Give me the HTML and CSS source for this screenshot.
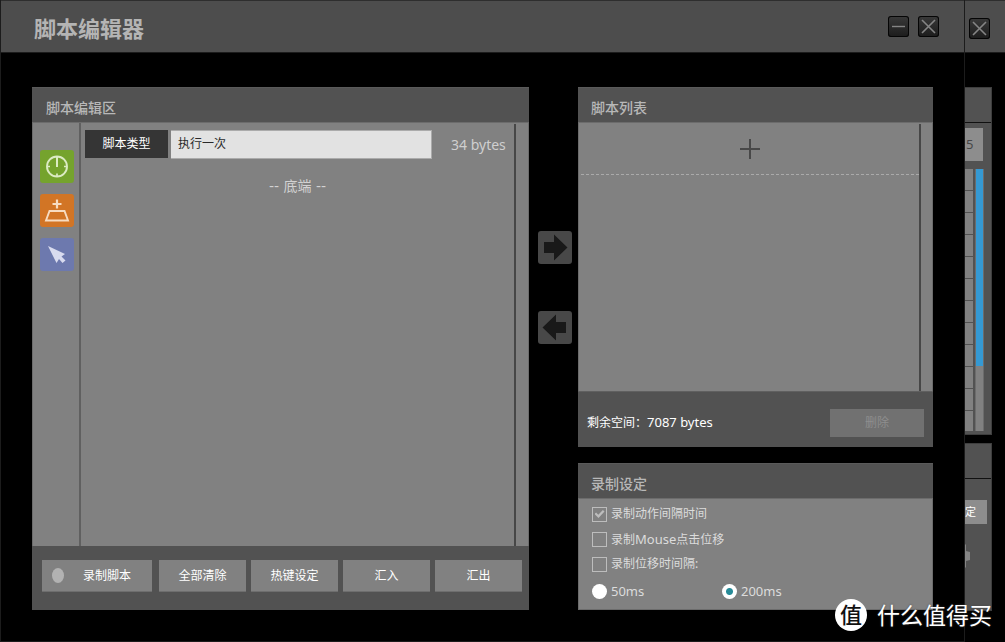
FILE: index.html
```html
<!DOCTYPE html>
<html lang="zh-CN">
<head>
<meta charset="utf-8">
<title>脚本编辑器</title>
<link rel="stylesheet" href="styles.css">
</head>
<body>
<div class="desktop">
  <main class="dialog">
    <header class="titlebar">
      <h1 class="title">脚本编辑器</h1>
      <div class="window-buttons">
        <button class="window-button" type="button" aria-label="最小化">
          <svg width="21" height="21" viewBox="0 0 21 21"><path d="M4 10.5h13" stroke="#858585" stroke-width="1.4"/></svg>
        </button>
        <button class="window-button" type="button" aria-label="关闭">
          <svg width="21" height="21" viewBox="0 0 21 21"><path d="M4 4l13 13M17 4L4 17" stroke="#858585" stroke-width="1.6"/></svg>
        </button>
      </div>
    </header>

    <div class="workspace">
      <section class="panel">
        <h2 class="panel-title">脚本编辑区</h2>
        <div class="panel-body">
          <div class="tools">
            <button class="tool tool-delay" type="button" aria-label="延迟">
              <svg width="34" height="33" viewBox="0 0 34 33" fill="none" stroke="#dcebc3"><circle cx="17" cy="16.500" r="10" stroke-width="1.9"/><path d="M17 7v10" stroke-width="2"/><path d="M17 23.500v3M7 16.500h3M24 16.500h3" stroke-width="1.7"/></svg>
            </button>
            <button class="tool tool-key" type="button" aria-label="按键">
              <svg width="34" height="33" viewBox="0 0 34 33" fill="none" stroke="#f7dcc0"><path d="M17 5.500v9M12.500 10h9" stroke-width="2.200"/><path d="M9.500 17h15l3.500 9.500H6z" stroke-width="1.9"/></svg>
            </button>
            <button class="tool tool-mouse" type="button" aria-label="鼠标">
              <svg width="34" height="33" viewBox="0 0 34 33"><path d="M8 8l17 8-3.500 2.500 4 4-3 2.500-3.500-4-2.500 4z" fill="#d8dbef"/></svg>
            </button>
          </div>
          <div class="script">
            <div class="script-row">
              <label class="type-label" for="type">脚本类型</label>
              <select class="type-select" id="type"><option>执行一次</option></select>
              <span class="script-size">34 bytes</span>
            </div>
            <p class="script-end">-- 底端 --</p>
          </div>
          <div class="scroll-gutter"></div>
        </div>
        <footer class="actions">
          <button class="action action-record" type="button"><span class="record-dot"></span><span class="record-text">录制脚本</span></button>
          <div class="action-group">
            <button class="action" type="button">全部清除</button>
            <button class="action" type="button">热键设定</button>
            <button class="action" type="button">汇入</button>
            <button class="action" type="button">汇出</button>
          </div>
        </footer>
      </section>

      <div class="transfer">
        <button class="transfer-button" type="button" aria-label="移到列表">
          <svg width="34" height="33" viewBox="0 0 34 33"><path d="M6 11h10V3.500L29.500 16.500 16 29.500V22H6z" fill="#191919"/></svg>
        </button>
        <button class="transfer-button" type="button" aria-label="移到编辑区">
          <svg width="34" height="33" viewBox="0 0 34 33"><path d="M28 11H18V3.500L4.500 16.500 18 29.500V22h10z" fill="#191919"/></svg>
        </button>
      </div>

      <div class="side">
        <section class="panel panel-list">
          <h2 class="panel-title">脚本列表</h2>
          <div class="panel-body">
            <div class="list">
              <button class="add" type="button" aria-label="新增脚本">
                <svg width="20" height="20" viewBox="0 0 20 20"><path d="M10 0v20M0 10h20" stroke="#484848" stroke-width="2"/></svg>
              </button>
            </div>
            <div class="scroll-gutter"></div>
          </div>
          <footer class="storage">
            <span class="storage-text">剩余空间：<span class="latin">7087 bytes</span></span>
            <button class="delete" type="button" disabled>删除</button>
          </footer>
        </section>

        <section class="panel">
          <h2 class="panel-title">录制设定</h2>
          <div class="settings">
            <label class="option"><input class="check" type="checkbox" checked>录制动作间隔时间</label>
            <label class="option"><input class="check" type="checkbox"><span>录制<span class="latin">Mouse</span>点击位移</span></label>
            <label class="option"><input class="check" type="checkbox">录制位移时间隔:</label>
            <div class="radios">
              <label class="option latin"><input class="radio" type="radio" name="interval">50ms</label>
              <label class="option latin"><input class="radio" type="radio" name="interval" checked>200ms</label>
            </div>
          </div>
        </section>
      </div>
    </div>
  </main>

  <aside class="back">
    <div class="back-titlebar">
      <button class="window-button" type="button" aria-label="关闭">
        <svg width="21" height="21" viewBox="0 0 21 21"><path d="M4 4l13 13M17 4L4 17" stroke="#858585" stroke-width="1.6"/></svg>
      </button>
    </div>
    <div class="back-content">
      <div class="back-panel">
        <div class="back-head"></div>
        <div class="back-value">5</div>
        <div class="back-list">
          <div class="back-rows"></div>
          <div class="back-scroll"><div class="back-thumb"></div></div>
        </div>
      </div>
      <div class="back-panel back-lower">
        <div class="back-head"></div>
        <button class="back-button" type="button">定</button>
        <svg class="back-gear" width="6" height="24" viewBox="0 0 6 24"><path d="M0 0l1 1v6l4 1v8l-4 1v6l-1 1z" fill="#858585"/></svg>
      </div>
    </div>
  </aside>

  <div class="watermark"><span class="watermark-logo">值</span><span>什么值得买</span></div>
</div>
</body>
</html>
```
FILE: styles.css
```css
* { box-sizing: border-box; }

body {
  margin: 0;
  background: #000;
  color: #dcdcdc;
  font: 12px/16px "Noto Sans", "Noto Sans CJK SC", sans-serif;
}

button, select {
  margin: 0;
  padding: 0;
  border: 0;
  border-radius: 0;
  color: inherit;
  font: inherit;
}

svg { display: block; }

.desktop {
  position: relative;
  display: flex;
  min-height: 100vh;
}

.dialog {
  flex: 1;
  display: flex;
  flex-direction: column;
  border: 1px solid #1c1c1c;
  border-width: 0 1px 1px;
}

.titlebar {
  display: flex;
  align-items: center;
  justify-content: space-between;
  height: 53px;
  padding: 0 25px 0 33px;
  background: #4d4d4d;
  border-top: 1px solid #2e2e2e;
  border-bottom: 1px solid #1c1c1c;
}

.title {
  margin: 2px 0 0;
  color: #b4b4b4;
  font-size: 22px;
  line-height: 32px;
  font-weight: 700;
}

.window-buttons { display: flex; gap: 9px; }

.window-button {
  width: 21px;
  height: 21px;
  border-radius: 3px;
  background: linear-gradient(#3a3a3a, #1c1c1c);
  box-shadow: inset 0 0 0 1px #050505;
}

.workspace {
  flex: 1;
  display: grid;
  grid-template-columns: 497fr 49px 355fr;
  padding: 34px 31px 31px;
}

.panel {
  display: flex;
  flex-direction: column;
  background: #525252;
  box-shadow: inset 0 1px #5a5a5a;
}

.panel-title {
  height: 35px;
  margin: 0;
  padding: 10px 14px 0;
  color: #b8b8b8;
  font-size: 14px;
  line-height: 21px;
  font-weight: 500;
}

.side .panel-title { padding-left: 13px; }

.panel-body {
  flex: 1;
  display: flex;
  background: #818181;
  border: 1px solid #6c6c6c;
  border-bottom: 0;
}

.tools {
  display: flex;
  flex-direction: column;
  gap: 11px;
  padding: 27px 5px 0 7px;
  border-right: 2px solid #606060;
}

.tool {
  width: 34px;
  height: 33px;
  border-radius: 3px;
}

.tool-delay { background: #75a32d; }
.tool-key { background: #d27525; }
.tool-mouse { background: #6d79ae; }

.script { flex: 1; padding: 7px 4px 0; }

.script-row { display: flex; gap: 3px; }

.type-label {
  width: 83px;
  height: 28px;
  background: #353535;
  color: #fff;
  line-height: 27px;
  text-align: center;
}

.type-select {
  flex: 1;
  height: 29px;
  padding: 0 7px 2px;
  appearance: none;
  background: #e2e2e2;
  border: 1px solid #ababab;
  border-width: 1px 1px 1px 0;
  color: #2a2a2a;
}

.script-size {
  width: 75px;
  padding: 5px 1px 0 16px;
  color: #cfcfcf;
  font-size: 14px;
  line-height: 20px;
  white-space: nowrap;
}

.script-end {
  margin: 17px 0 0;
  color: #d2d2d2;
  font: 14px/20px "DejaVu Sans", "Noto Sans CJK SC", sans-serif;
  text-align: center;
}

.scroll-gutter {
  width: 14px;
  margin-top: 1px;
  border-left: 2px solid #474747;
}

.panel-list .scroll-gutter { width: 13px; }

.actions {
  display: grid;
  grid-template-columns: 110fr 363fr;
  gap: 7px;
  padding: 14px 7px 18px 10px;
}

.action-group { display: flex; gap: 5px; }

.action {
  flex: 1;
  height: 32px;
  background: #818181;
  border-bottom: 1px solid #6e6e6e;
  color: #fff;
}

.action-record {
  display: flex;
  align-items: center;
  padding: 0 10px;
}

.record-dot {
  width: 12px;
  height: 15px;
  border-radius: 50%;
  background: #b2b2b2;
}

.record-text { flex: 1; padding-left: 8px; }

.transfer {
  display: flex;
  flex-direction: column;
  gap: 47px;
  padding: 144px 6px 0 9px;
}

.transfer-button {
  width: 34px;
  height: 33px;
  border-radius: 3px;
  background: #484848;
}

.side {
  display: flex;
  flex-direction: column;
  gap: 16px;
}

.panel-list { flex: 1; }

.list { flex: 1; padding-left: 2px; }

.add {
  display: flex;
  align-items: center;
  justify-content: center;
  width: 100%;
  height: 52px;
  background: none;
  border-bottom: 1px dashed #aaa;
}

.storage {
  display: flex;
  justify-content: space-between;
  padding: 17px 9px 10px;
  border-top: 1px solid #606060;
}

.storage-text { color: #fff; line-height: 26px; }

.latin { font-size: 13px; }

.delete {
  width: 94px;
  height: 28px;
  background: #717171;
  color: #8e8e8e;
}

.settings {
  display: flex;
  flex-direction: column;
  gap: 9px;
  padding: 7px 14px 10px 13px;
  background: #818181;
  border: 1px solid #6c6c6c;
}

.option {
  display: flex;
  align-items: center;
  gap: 4px;
  height: 16px;
}

.check, .radio {
  appearance: none;
  width: 15px;
  height: 15px;
  margin: 0;
  border: 1px solid #bdbdbd;
}

.check:checked {
  display: grid;
  place-items: center;
}

.check:checked::before {
  content: "";
  width: 10px;
  height: 8px;
  background: #bdbdbd;
  clip-path: polygon(0 50%, 16% 30%, 38% 60%, 84% 0, 100% 18%, 40% 100%);
}

.radio {
  border: 0;
  border-radius: 50%;
  background: #fff;
}

.radio:checked { background: radial-gradient(circle, #278b98 3px, #fff 4px); }

.radios {
  display: grid;
  grid-template-columns: 130px 1fr;
  padding-top: 2px;
}

.back { width: 40px; }

.back-titlebar {
  height: 53px;
  padding: 17px 4px 0;
  background: #4d4d4d;
  border-top: 1px solid #2e2e2e;
  border-bottom: 1px solid #1c1c1c;
}

.back-content {
  display: flex;
  flex-direction: column;
  gap: 8px;
  padding: 34px 13px 0 0;
}

.back-panel {
  padding-bottom: 3px;
  background: #525252;
  border-right: 1px solid #3e3e3e;
  border-bottom: 1px solid #3e3e3e;
}

.back-head {
  height: 36px;
  border-top: 1px solid #3e3e3e;
  border-bottom: 1px solid #111;
}

.back-value {
  width: 18px;
  height: 33px;
  margin-top: 5px;
  padding-left: 1px;
  background: #8d8d8d;
  color: #464646;
  font-size: 13px;
  line-height: 33px;
}

.back-list {
  display: flex;
  gap: 2px;
  height: 262px;
  margin-top: 8px;
}

.back-rows {
  width: 8px;
  background: repeating-linear-gradient(#818181 0 21px, #525252 21px 22px);
}

.back-scroll {
  width: 9px;
  background: #818181;
  border: 1px solid #6c6c6c;
  border-width: 0 1px;
}

.back-thumb { height: 75%; background: #3599d3; }

.back-lower { height: 168px; }

.back-button {
  display: block;
  width: 22px;
  height: 24px;
  margin-top: 21px;
  background: #8d8d8d;
  color: #fff;
  font-size: 11px;
  text-align: left;
}

.back-gear { margin-top: 20px; }

.watermark {
  position: absolute;
  right: 13px;
  bottom: 11px;
  display: flex;
  align-items: center;
  gap: 10px;
  color: #fff;
  font-size: 23px;
  line-height: 32px;
  font-weight: 400;
  text-shadow: 0 0 2px #444;
}

.watermark-logo {
  width: 32px;
  height: 32px;
  border-radius: 50%;
  background: #fff;
  color: #111;
  font-weight: 500;
  font-size: 22px;
  line-height: 30px;
  text-align: center;
  text-shadow: none;
}
```
